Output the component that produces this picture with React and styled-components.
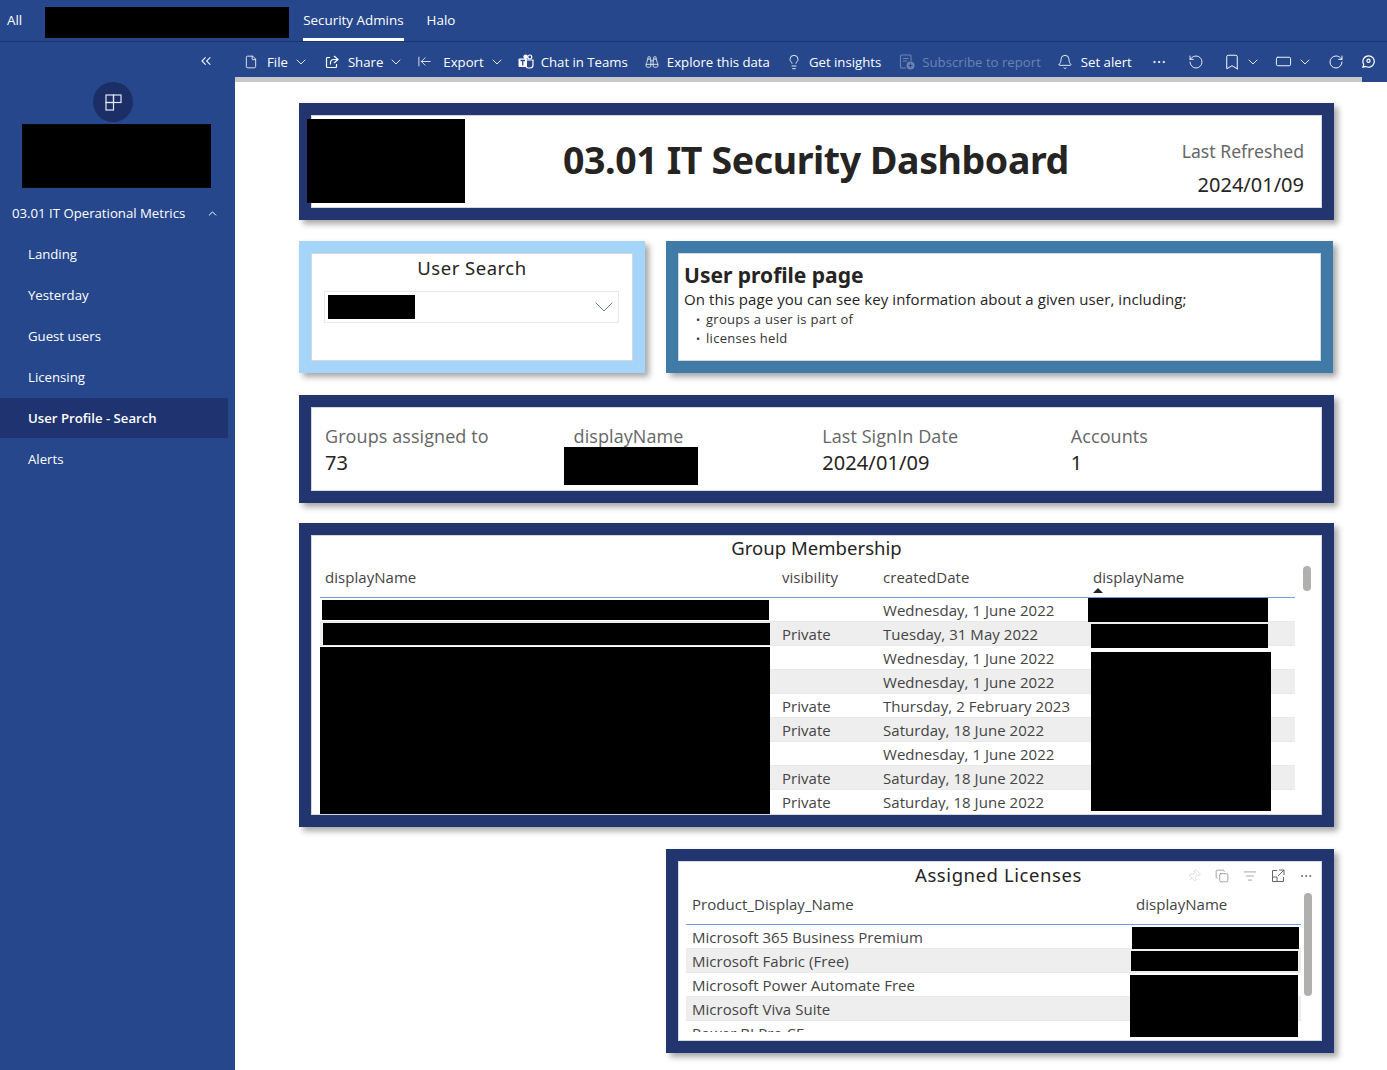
import React from 'react';
import styled, { createGlobalStyle } from 'styled-components';
import {
  File, ChevronDown, ChevronUp, ChevronsLeft, ArrowLeftToLine, Binoculars, Lightbulb, Bell,
  Ellipsis, RotateCcw, RotateCw, Bookmark, RectangleHorizontal, Pin, Copy, ListFilter,
} from 'lucide-react';

const NAVY = '#22356f';
const BLUE = '#26478c';
const BODY_FONT = '"Open Sans", "Noto Sans", sans-serif';
const TITLE_FONT = '"Noto Sans", "Open Sans", sans-serif';

const GlobalStyle = createGlobalStyle`
  html, body { margin: 0; padding: 0; background: #fff; }
  body { font-family: ${BODY_FONT}; }
  * { box-sizing: border-box; }
`;

const Page = styled.div`
  width: 1387px;
  height: 1070px;
  overflow: hidden;
  display: grid;
  grid-template-rows: 42px 1fr;
  background: ${BLUE};
  color: #fff;
`;

/* top app bar */
const TopBar = styled.div`
  display: flex;
  align-items: stretch;
  padding-left: 7px;
  border-bottom: 1px solid #1c3570;
  font-size: 13.4px;
`;

const TopLink = styled.div`
  display: flex;
  align-items: center;
  height: 41px;
  padding-bottom: 1px;
  margin-right: ${(p) => p.$mr}px;
  border-bottom: 3px solid ${(p) => (p.$active ? '#fff' : 'transparent')};
  border-top: 3px solid transparent;
`;

const Black = styled.div`
  background: #000;
  flex: none;
  width: ${(p) => p.$w}px;
  height: ${(p) => p.$h}px;
`;

const TopRedact = styled(Black)`
  margin: 7px 14px 0 0;
`;

const Body = styled.div`
  display: grid;
  grid-template-columns: 235px 1fr;
  min-height: 0;
`;

/* left nav */
const Sidebar = styled.nav`
  display: flex;
  flex-direction: column;
  font-size: 13.2px;
`;

const Collapse = styled.div`
  display: flex;
  justify-content: flex-end;
  height: 40px;
  padding: 11px 21px 0 0;
  color: #eef1f8;
`;

const AppBadge = styled.div`
  width: 40px;
  height: 40px;
  margin-left: 93px;
  border-radius: 50%;
  background: #1b2e66;
  display: flex;
  align-items: center;
  justify-content: center;
`;

const SideLogo = styled(Black)`
  margin: 2px 0 0 22px;
`;

const SectionRow = styled.div`
  display: flex;
  align-items: center;
  justify-content: space-between;
  height: 20px;
  margin-top: 15px;
  padding: 0 16px 0 12px;
`;

const NavList = styled.div`
  display: flex;
  flex-direction: column;
  margin-top: 11px;
`;

const NavItem = styled.div`
  width: 228px;
  height: 41px;
  display: flex;
  align-items: center;
  padding-left: 28px;
  font-weight: ${(p) => (p.$active ? 600 : 400)};
  border-bottom: 1px solid transparent;
  background: ${(p) => (p.$active ? '#1f3370' : 'transparent')};
  background-clip: padding-box;
`;

/* report area */
const Main = styled.main`
  display: grid;
  grid-template-rows: 35px 5px 1fr;
  min-height: 0;
`;

const Toolbar = styled.div`
  display: flex;
  align-items: center;
  padding: 4px 0 0 9px;
  font-size: 13.2px;
  white-space: nowrap;
`;

const ToolBtn = styled.div`
  display: flex;
  align-items: center;
  flex: none;
  gap: ${(p) => p.$gap ?? 9}px;
  margin-right: ${(p) => p.$mr ?? 18}px;
  color: ${(p) => (p.$disabled ? '#6d83b3' : '#fff')};
`;

const Chevron = styled(ChevronDown).attrs({ size: 16, strokeWidth: 1.3 })`
  margin: 0 -4px;
`;

const HScroll = styled.div`
  &::before {
    content: '';
    display: block;
    width: 1127px;
    height: 5px;
    background: #c8c8c8;
  }
`;

const Canvas = styled.div`
  background: #fff;
  padding: 21px 0 0 64px;
  color: #252423;
  display: flex;
  flex-direction: column;
  min-height: 0;
`;

const Row = styled.div`
  display: flex;
  gap: 21px;
  margin-top: ${(p) => p.$mt ?? 0}px;
  margin-left: ${(p) => p.$ml ?? 0}px;
`;

const Card = styled.section`
  position: relative;
  flex: none;
  width: ${(p) => p.$w}px;
  height: ${(p) => p.$h}px;
  border: 12px solid ${(p) => p.$color ?? NAVY};
  background: #fff;
  box-shadow: 4px 4px 6px rgba(0, 0, 0, 0.35), inset 0 0 0 1px rgba(34, 53, 111, 0.2);
`;

/* black boxes that hide names, laid over the visual */
const Cover = styled(Black)`
  position: absolute;
  left: ${(p) => p.$x}px;
  top: ${(p) => p.$y}px;
`;

const HeaderBody = styled.div`
  height: 100%;
  display: grid;
  grid-template-columns: 1fr auto;
  align-items: center;
`;

const Title = styled.h1`
  margin: 0;
  padding: 0 0 5px 252px;
  font: 700 37.5px ${TITLE_FONT};
  letter-spacing: -0.4px;
  white-space: nowrap;
`;

const Refreshed = styled.div`
  text-align: right;
  margin-top: 12px;
  padding-right: 18px;
  font-family: ${TITLE_FONT};
`;

const RefreshedLabel = styled.div`
  font-size: 17.6px;
  color: #666;
  line-height: 34px;
`;

const RefreshedValue = styled.div`
  font-size: 20px;
  line-height: 34px;
  color: #252423;
`;

const SearchTitle = styled.div`
  text-align: center;
  font: 400 18.5px/30px ${TITLE_FONT};
  letter-spacing: 0.5px;
`;

const SelectBox = styled.div`
  position: relative;
  height: 32px;
  margin: 8px 14px 0 13px;
  border: 1px solid #e8e8e8;
  display: flex;
  align-items: center;
  justify-content: flex-end;
  color: #6f8290;
`;

const SelectArrow = styled(ChevronDown).attrs({ size: 32, strokeWidth: 0.75 })`
  margin-right: -2px;
`;

const ProfileBody = styled.div`
  padding: 6px 6px 0 6px;
`;

const ProfileTitle = styled.h2`
  margin: 0;
  font: 700 21px/32px ${TITLE_FONT};
`;

const ProfileText = styled.p`
  margin: -2px 0 0;
  font-size: 15px;
  line-height: 20px;
  letter-spacing: 0.08px;
`;

const BulletList = styled.ul`
  margin: 1px 0 0;
  padding: 0 0 0 22px;
  list-style: none;
  font-size: 13px;
  line-height: 19px;
  letter-spacing: 0.3px;
  color: #333;
  li::before {
    content: '•';
    display: inline-block;
    width: 0;
    margin-left: -10px;
    margin-right: 10px;
    font-size: 11px;
  }
`;

const KpiGrid = styled.div`
  height: 100%;
  display: grid;
  grid-template-columns: repeat(4, 248.6px);
  padding: 16px 0 0 14px;
`;

const KpiLabel = styled.div`
  font-size: 18px;
  line-height: 26px;
  letter-spacing: 0.08px;
  color: #666;
`;

const KpiValue = styled.div`
  font: 400 20px/28px ${TITLE_FONT};
  letter-spacing: 0.1px;
`;

const TableTitle = styled.div`
  text-align: center;
  font: 400 18.5px/26px ${TITLE_FONT};
  letter-spacing: ${(p) => p.$ls}px;
  margin-top: ${(p) => p.$mt ?? 0}px;
  padding-right: ${(p) => p.$pr ?? 0}px;
`;

const TableClip = styled.div`
  height: ${(p) => p.$h}px;
  margin: ${(p) => p.$mt}px 0 0 ${(p) => p.$ml}px;
  width: ${(p) => p.$w}px;
  overflow: hidden;
  font-size: 15px;
  letter-spacing: 0.04px;
`;

const TableHead = styled.div`
  display: grid;
  grid-template-columns: ${(p) => p.$cols};
  align-items: center;
  height: ${(p) => p.$h}px;
  border-bottom: 1px solid #6f9ae8;
  color: #444;
  padding-bottom: ${(p) => p.$pb ?? 0}px;
`;

const TableRow = styled.div`
  display: grid;
  grid-template-columns: ${(p) => p.$cols};
  align-items: center;
  height: 24px;
  background: ${(p) => (p.$odd ? '#eeeeee' : '#fff')};
  border-bottom: 1px solid #e9e9e9;
  color: #444;
`;

const Cell = styled.div`
  position: relative;
  padding-left: ${(p) => p.$pl ?? 5}px;
  white-space: nowrap;
`;

const SortMark = styled.span`
  position: absolute;
  left: 5px;
  top: 21px;
  border-left: 5px solid transparent;
  border-right: 5px solid transparent;
  border-bottom: 5px solid #252423;
`;

const ScrollThumb = styled.div`
  position: absolute;
  left: ${(p) => p.$x}px;
  top: ${(p) => p.$y}px;
  width: 8px;
  height: ${(p) => p.$h}px;
  border-radius: 4px;
  background: #b0b0ae;
`;

const VisualActions = styled.div`
  position: absolute;
  top: 8px;
  right: 9px;
  display: flex;
  gap: 14px;
  color: #666;
`;

const TiltedPin = styled(Pin).attrs({ size: 14, strokeWidth: 1, color: '#c8c8c8' })`
  transform: rotate(45deg);
`;

/* small drawings without a package icon */
const ShareIcon = () => (
  <svg width="14" height="14" viewBox="0 0 14 14" fill="none" stroke="#fff" strokeWidth="1.2">
    <path d="M5 2.5H2.5a1 1 0 0 0-1 1v8a1 1 0 0 0 1 1h8a1 1 0 0 0 1-1V9" />
    <path d="M9 1l4 3.5L9 8M13 4.5H8.500a3 3 0 0 0-3 3V9.500" />
  </svg>
);

const TeamsIcon = () => (
  <svg width="16" height="16" viewBox="0 0 16 16">
    <circle cx="11.8" cy="3" r="2" fill="none" stroke="#fff" strokeWidth="1.2" />
    <circle cx="7.6" cy="2.8" r="2.2" fill="#fff" />
    <path d="M8 6h7v5a3 3 0 0 1-3 3H10a2.5 2.5 0 0 1-2-2z" fill="none" stroke="#fff" strokeWidth="1.2" />
    <rect x="0.5" y="4.5" width="8.5" height="8.5" rx="1" fill="#fff" />
    <path d="M2.5 6.5h4.5M4.75 6.5v5" stroke={BLUE} strokeWidth="1.3" />
  </svg>
);

const SubscribeIcon = () => (
  <svg width="16" height="16" viewBox="0 0 16 16" fill="none" stroke="#6d83b3" strokeWidth="1.1">
    <path d="M7 14H2.5a1 1 0 0 1-1-1V2a1 1 0 0 1 1-1H11a1 1 0 0 1 1 1v5" />
    <path d="M4 4.5h5.5M4 7h4" />
    <circle cx="11.5" cy="11.5" r="4" fill="#6d83b3" stroke="none" />
    <path d="M11.5 9.5v4M9.5 11.5h4" stroke={BLUE} />
  </svg>
);

const CommentIcon = () => (
  <svg width="13" height="13" viewBox="0 0 13 13" fill="none" stroke="#fff" strokeWidth="1.2">
    <path d="M6.5.8a5.7 5.7 0 1 1-2.7 10.7L.9 12.2l.8-2.8A5.7 5.7 0 0 1 6.5.8z" />
    <circle cx="6.5" cy="5.8" r="1.6" />
  </svg>
);

const AppIcon = () => (
  <svg width="17" height="17" viewBox="0 0 17 17" fill="none" stroke="#e4e8f3" strokeWidth="1.2">
    <rect x="1" y="1" width="7.5" height="7.5" />
    <rect x="8.5" y="1" width="7.5" height="7.5" />
    <rect x="1" y="8.5" width="7.5" height="7.5" />
  </svg>
);

const ExpandIcon = () => (
  <svg width="14" height="14" viewBox="0 0 14 14" fill="none" stroke="#666" strokeWidth="1">
    <path d="M6 1.500H1.500v11h11V8M8 1h5v5M13 1 7 7M1.500 8h4.500v4.500" />
  </svg>
);

const navItems = ['Landing', 'Yesterday', 'Guest users', 'Licensing', 'User Profile - Search', 'Alerts'];

const groupCols = '457px 101px 210px 207px';
const groupRows = [
  ['', 'Wednesday, 1 June 2022'],
  ['Private', 'Tuesday, 31 May 2022'],
  ['', 'Wednesday, 1 June 2022'],
  ['', 'Wednesday, 1 June 2022'],
  ['Private', 'Thursday, 2 February 2023'],
  ['Private', 'Saturday, 18 June 2022'],
  ['', 'Wednesday, 1 June 2022'],
  ['Private', 'Saturday, 18 June 2022'],
  ['Private', 'Saturday, 18 June 2022'],
];

const licenseCols = '445px 170px';
const licenses = [
  'Microsoft 365 Business Premium',
  'Microsoft Fabric (Free)',
  'Microsoft Power Automate Free',
  'Microsoft Viva Suite',
  'Power BI Pro CE',
];

export default function App() {
  return (
    <>
      <GlobalStyle />
      <Page>
        <TopBar>
          <TopLink $mr={23}>All</TopLink>
          <TopRedact $w={244} $h={31} />
          <TopLink $mr={23} $active>Security Admins</TopLink>
          <TopLink $mr={0}>Halo</TopLink>
        </TopBar>
        <Body>
          <Sidebar>
            <Collapse><ChevronsLeft size={16} strokeWidth={1.6} /></Collapse>
            <AppBadge><AppIcon /></AppBadge>
            <SideLogo $w={189} $h={64} />
            <SectionRow>
              <span>03.01 IT Operational Metrics</span>
              <ChevronUp size={13} strokeWidth={1.8} />
            </SectionRow>
            <NavList>
              {navItems.map((item, index) => (
                <NavItem key={item} $active={index === 4}>{item}</NavItem>
              ))}
            </NavList>
          </Sidebar>
          <Main>
            <Toolbar>
              <ToolBtn $mr={9}><File size={14} strokeWidth={1.4} />File</ToolBtn>
              <ToolBtn $mr={20}><Chevron /></ToolBtn>
              <ToolBtn $mr={9}><ShareIcon />Share</ToolBtn>
              <ToolBtn $mr={17}><Chevron /></ToolBtn>
              <ToolBtn $gap={11} $mr={9}><ArrowLeftToLine size={15} strokeWidth={1.3} />Export</ToolBtn>
              <ToolBtn $mr={17}><Chevron /></ToolBtn>
              <ToolBtn $gap={7} $mr={17}><TeamsIcon />Chat in Teams</ToolBtn>
              <ToolBtn $gap={8} $mr={16}><Binoculars size={14} strokeWidth={1.3} />Explore this data</ToolBtn>
              <ToolBtn $gap={7} $mr={18}><Lightbulb size={16} strokeWidth={1.3} />Get insights</ToolBtn>
              <ToolBtn $gap={7} $mr={16} $disabled><SubscribeIcon />Subscribe to report</ToolBtn>
              <ToolBtn $gap={8} $mr={19}><Bell size={16} strokeWidth={1.3} />Set alert</ToolBtn>
              <ToolBtn $mr={21}><Ellipsis size={16} strokeWidth={1.5} /></ToolBtn>
              <ToolBtn $mr={19}><RotateCcw size={16} strokeWidth={1.3} /></ToolBtn>
              <ToolBtn $mr={8}><Bookmark size={18} strokeWidth={1.3} /></ToolBtn>
              <ToolBtn $mr={18}><Chevron /></ToolBtn>
              <ToolBtn $mr={9}><RectangleHorizontal size={17} strokeWidth={1.3} /></ToolBtn>
              <ToolBtn $mr={19}><Chevron /></ToolBtn>
              <ToolBtn $mr={18}><RotateCw size={16} strokeWidth={1.4} /></ToolBtn>
              <ToolBtn $mr={0}><CommentIcon /></ToolBtn>
            </Toolbar>
            <HScroll />
            <Canvas>
              <Row>
                <Card $w={1035} $h={117}>
                  <HeaderBody>
                    <Title>03.01 IT Security Dashboard</Title>
                    <Refreshed>
                      <RefreshedLabel>Last Refreshed</RefreshedLabel>
                      <RefreshedValue>2024/01/09</RefreshedValue>
                    </Refreshed>
                  </HeaderBody>
                  <Cover $x={-4} $y={4} $w={158} $h={84} />
                </Card>
              </Row>

              <Row $mt={21}>
                <Card $w={346} $h={132} $color="#a5d5f8">
                  <SearchTitle>User Search</SearchTitle>
                  <SelectBox>
                    <SelectArrow />
                    <Cover $x={3} $y={3} $w={87} $h={24} />
                  </SelectBox>
                </Card>
                <Card $w={667} $h={132} $color="#407ba8">
                  <ProfileBody>
                    <ProfileTitle>User profile page</ProfileTitle>
                    <ProfileText>On this page you can see key information about a given user, including;</ProfileText>
                    <BulletList>
                      <li>groups a user is part of</li>
                      <li>licenses held</li>
                    </BulletList>
                  </ProfileBody>
                </Card>
              </Row>

              <Row $mt={22}>
                <Card $w={1035} $h={108}>
                  <KpiGrid>
                    <div>
                      <KpiLabel>Groups assigned to</KpiLabel>
                      <KpiValue>73</KpiValue>
                    </div>
                    <div>
                      <KpiLabel>displayName</KpiLabel>
                    </div>
                    <div>
                      <KpiLabel>Last SignIn Date</KpiLabel>
                      <KpiValue>2024/01/09</KpiValue>
                    </div>
                    <div>
                      <KpiLabel>Accounts</KpiLabel>
                      <KpiValue>1</KpiValue>
                    </div>
                  </KpiGrid>
                  <Cover $x={253} $y={40} $w={134} $h={38} />
                </Card>
              </Row>

              <Row $mt={20}>
                <Card $w={1035} $h={304}>
                  <TableTitle $ls={0.03}>Group Membership</TableTitle>
                  <TableClip $w={975} $h={250} $mt={0} $ml={9}>
                    <TableHead $cols={groupCols} $h={37} $pb={5}>
                      <Cell $pl={5}>displayName</Cell>
                      <Cell>visibility</Cell>
                      <Cell>createdDate</Cell>
                      <Cell>displayName<SortMark /></Cell>
                    </TableHead>
                    {groupRows.map(([visibility, created], index) => (
                      <TableRow key={index} $cols={groupCols} $odd={index % 2 === 1}>
                        <Cell />
                        <Cell>{visibility}</Cell>
                        <Cell>{created}</Cell>
                        <Cell />
                      </TableRow>
                    ))}
                  </TableClip>
                  <ScrollThumb $x={992} $y={31} $h={25} />
                  <Cover $x={11} $y={65} $w={447} $h={20} />
                  <Cover $x={12} $y={88} $w={447} $h={22} />
                  <Cover $x={9} $y={112} $w={450} $h={167} />
                  <Cover $x={777} $y={63} $w={180} $h={24} />
                  <Cover $x={780} $y={89} $w={177} $h={24} />
                  <Cover $x={780} $y={117} $w={180} $h={159} />
                </Card>
              </Row>

              <Row $mt={22} $ml={367}>
                <Card $w={668} $h={204}>
                  <TableTitle $ls={0.58} $mt={1} $pr={3}>Assigned Licenses</TableTitle>
                  <VisualActions>
                    <TiltedPin />
                    <Copy size={14} strokeWidth={1} />
                    <ListFilter size={14} strokeWidth={1} />
                    <ExpandIcon />
                    <Ellipsis size={14} strokeWidth={1.5} />
                  </VisualActions>
                  <TableClip $w={615} $h={141} $mt={3} $ml={8}>
                    <TableHead $cols={licenseCols} $h={34} $pb={8}>
                      <Cell $pl={6}>Product_Display_Name</Cell>
                      <Cell>displayName</Cell>
                    </TableHead>
                    {licenses.map((name, index) => (
                      <TableRow key={name} $cols={licenseCols} $odd={index % 2 === 1}>
                        <Cell $pl={6}>{name}</Cell>
                        <Cell />
                      </TableRow>
                    ))}
                  </TableClip>
                  <ScrollThumb $x={626} $y={32} $h={103} />
                  <Cover $x={454} $y={66} $w={167} $h={22} />
                  <Cover $x={453} $y={90} $w={167} $h={20} />
                  <Cover $x={452} $y={114} $w={168} $h={62} />
                </Card>
              </Row>
            </Canvas>
          </Main>
        </Body>
      </Page>
    </>
  );
}
